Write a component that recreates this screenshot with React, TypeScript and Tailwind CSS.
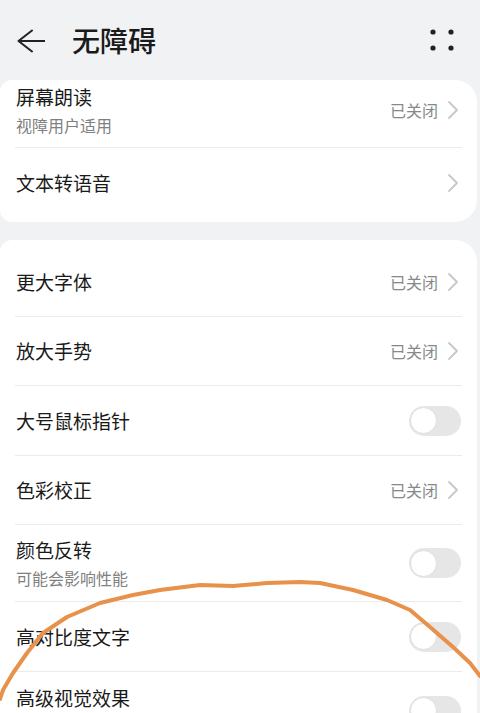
import React from "react";

const FONT = { fontFamily: '"Noto Sans CJK SC", "Noto Sans", sans-serif' };

function Chevron() {
  return (
    <svg width="12" height="20" viewBox="0 0 12 20" className="ml-[9px]">
      <path d="M2 2 L10 10 L2 18" fill="none" stroke="#c8c8c8" strokeWidth="1.8" strokeLinecap="round" strokeLinejoin="round" />
    </svg>
  );
}

function Toggle() {
  return (
    <div className="w-[52px] h-[30px] rounded-full bg-[#e6e6e6] flex items-center pl-[1px]">
      <div className="w-[27px] h-[27px] rounded-full bg-white border border-[#dedede]" />
    </div>
  );
}

type RowProps = {
  title: string;
  sub?: string;
  right: "closed" | "chevron" | "toggle";
  h: string;
  last?: boolean;
};

function Row({ title, sub, right, h, last }: RowProps) {
  return (
    <div className={`${h} mx-[15px] flex items-center justify-between ${last ? "" : "border-b border-[#ebebeb]"}`}>
      <div className="flex flex-col pl-[1px]">
        <div className="text-[19px] leading-[24px] text-[#1a1a1a]">{title}</div>
        {sub && <div className="mt-[6px] text-[16px] leading-[20px] text-[#808080]">{sub}</div>}
      </div>
      <div className="flex items-center pr-[3px]">
        {right === "closed" && (
          <>
            <span className="text-[16px] leading-[20px] text-[#888888]">已关闭</span>
            <Chevron />
          </>
        )}
        {right === "chevron" && <Chevron />}
        {right === "toggle" && <div className="-mr-[2px]"><Toggle /></div>}
      </div>
    </div>
  );
}

export default function App() {
  const pts =
    "0,699 3,690 13,673 27,653 43,633 67,617 100,603 133,595 160,590 200,585 233,586 267,583 300,582 320,583 353,590 387,600 410,610 430,627 453,647 470,663 480,676";
  return (
    <div className="relative w-[480px] h-[713px] overflow-hidden bg-[#f1f2f4]" style={FONT}>
      {/* Header */}
      <div className="h-[80px] flex items-center">
        <svg width="28" height="24" viewBox="0 0 28 24" className="ml-[17px] mt-[2px]">
          <path d="M1.5 12 H28 M15 1.5 L1.5 12 L15 22.5" fill="none" stroke="#222" strokeWidth="2" strokeLinecap="round" strokeLinejoin="round" />
        </svg>
        <div className="ml-[27px] text-[28px] leading-[34px] font-medium text-[#1a1a1a]">无障碍</div>
        <svg width="24" height="24" viewBox="0 0 24 24" className="ml-auto mr-[26px]">
          <circle cx="3" cy="4" r="2.6" fill="#222" />
          <circle cx="21" cy="4" r="2.6" fill="#222" />
          <circle cx="3" cy="20" r="2.6" fill="#222" />
          <circle cx="21" cy="20" r="2.6" fill="#222" />
        </svg>
      </div>

      {/* Card 1 */}
      <div className="w-[477px] bg-white rounded-r-[22px] rounded-l-[12px] pb-[4px]">
        <div className="h-[68px] mx-[15px] flex items-center justify-between border-b border-[#ebebeb] pb-[8px]">
          <div className="flex flex-col pl-[1px]">
            <div className="text-[19px] leading-[24px] text-[#1a1a1a]">屏幕朗读</div>
            <div className="mt-[6px] text-[16px] leading-[20px] text-[#808080]">视障用户适用</div>
          </div>
          <div className="flex items-center pr-[3px]">
            <span className="text-[16px] leading-[20px] text-[#888888]">已关闭</span>
            <Chevron />
          </div>
        </div>
        <Row title="文本转语音" right="chevron" h="h-[70px]" last />
      </div>

      {/* Card 2 */}
      <div className="mt-[18px] w-[477px] bg-white rounded-r-[22px] rounded-l-[12px] pt-[7px] pb-[20px]">
        <Row title="更大字体" right="closed" h="h-[70px]" />
        <Row title="放大手势" right="closed" h="h-[69px]" />
        <Row title="大号鼠标指针" right="toggle" h="h-[70px]" />
        <Row title="色彩校正" right="closed" h="h-[69px]" />
        <Row title="颜色反转" sub="可能会影响性能" right="toggle" h="h-[77px]" />
        <Row title="高对比度文字" right="toggle" h="h-[70px]" />
        <Row title="高级视觉效果" sub="减少动画、透明度等视觉效果" right="toggle" h="h-[77px]" last />
      </div>

      {/* Hand-drawn annotation */}
      <svg className="absolute left-0 top-0 pointer-events-none" width="480" height="713" viewBox="0 0 480 713">
        <polyline points={pts} fill="none" stroke="#e8914a" strokeWidth="4" strokeLinecap="round" strokeLinejoin="round" />
      </svg>
    </div>
  );
}
